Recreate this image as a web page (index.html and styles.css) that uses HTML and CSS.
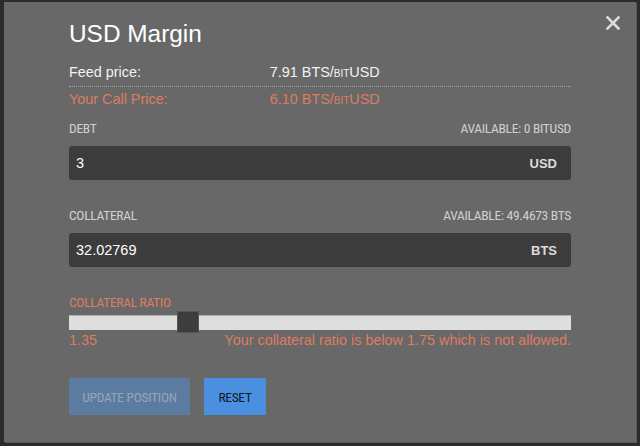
FILE: index.html
```html
<!DOCTYPE html>
<html lang="en">
<head>
<meta charset="utf-8">
<title>USD Margin</title>
<link rel="stylesheet" href="styles.css">
</head>
<body>
<div class="overlay">
  <div class="modal">
    <button class="close" aria-label="Close">
      <svg width="14" height="14" viewBox="0 0 14 14"><path d="M1.5 1.5 L12.5 12.5 M12.5 1.5 L1.5 12.5" stroke="#dcdcdc" stroke-width="2.6" stroke-linecap="square" fill="none"/></svg>
    </button>
    <h1 class="title">USD Margin</h1>
    <div class="prices">
      <div class="price-row feed">
        <span class="key">Feed price:</span>
        <span class="val">7.91 BTS/<span class="bit">bit</span>USD</span>
      </div>
      <div class="price-row call">
        <span class="key">Your Call Price:</span>
        <span class="val">6.10 BTS/<span class="bit">bit</span>USD</span>
      </div>
    </div>

    <div class="field">
      <div class="label-row"><span>DEBT</span><span>AVAILABLE: 0 BITUSD</span></div>
      <div class="input"><span class="amount">3</span><span class="unit">USD</span></div>
    </div>

    <div class="field">
      <div class="label-row"><span>COLLATERAL</span><span>AVAILABLE: 49.4673 BTS</span></div>
      <div class="input"><span class="amount">32.02769</span><span class="unit">BTS</span></div>
    </div>

    <div class="field ratio">
      <div class="label-row warn"><span>COLLATERAL RATIO</span></div>
      <div class="slider">
        <div class="thumb" style="left:108px"></div>
      </div>
      <div class="ratio-row">
        <span>1.35</span>
        <span>Your collateral ratio is below 1.75 which is not allowed.</span>
      </div>
    </div>

    <div class="buttons">
      <button class="btn disabled">UPDATE POSITION</button>
      <button class="btn primary">RESET</button>
    </div>
  </div>
</div>
</body>
</html>
```

FILE: styles.css
```css
html, body {
  margin: 0;
  padding: 0;
}
body {
  background: #2b2b2b;
  width: 640px;
  height: 446px;
  overflow: hidden;
  font-family: "Liberation Sans", Arial, sans-serif;
}
.overlay {
  padding: 2px 4px 0 4px;
}
.modal {
  position: relative;
  box-sizing: border-box;
  width: 632px;
  height: 440px;
  background: #686868;
  padding: 18px 65px 0 65px;
  box-shadow: 1px 1px 0 #5a5a5a;
}
.close {
  position: absolute;
  top: 14px;
  right: 16px;
  width: 14px;
  height: 14px;
  padding: 0;
  margin: 0;
  border: 0;
  background: none;
  display: flex;
}
.title {
  margin: 0 0 12px 0;
  font-size: 24.4px;
  line-height: 28px;
  font-weight: normal;
  color: #ffffff;
}
.price-row {
  display: flex;
  font-size: 14.4px;
  line-height: 20px;
}
.price-row .key {
  width: 40%;
}
.price-row.feed {
  color: #f2f2f2;
  padding: 2px 0 4px 0;
  border-bottom: 1px dotted #a8a8a8;
}
.price-row.call {
  color: #de7c60;
  padding-top: 2px;
}
.bit {
  font-variant: small-caps;
}
.field {
  margin-top: 27px;
}
.prices + .field {
  margin-top: 11px;
}
.label-row {
  display: flex;
  justify-content: space-between;
  font-family: "Liberation Sans Narrow", "Roboto Condensed", "DejaVu Sans Condensed", Roboto, sans-serif;
  font-size: 13.5px;
  letter-spacing: -0.3px;
  line-height: 16px;
  color: #d0d0d0;
}
.label-row.warn {
  color: #de7c60;
}
.input {
  margin-top: 10px;
  height: 34px;
  box-sizing: border-box;
  background: #3c3c3c;
  border-radius: 3px;
  display: flex;
  align-items: center;
  justify-content: space-between;
  padding: 0 14px 0 7px;
}
.amount {
  color: #ffffff;
  font-size: 14.5px;
}
.unit {
  color: #dcdcdc;
  font-size: 13px;
  font-weight: bold;
}
.slider {
  position: relative;
  margin-top: 5px;
  height: 15px;
  box-sizing: border-box;
  background: #dedede;
  border-top: 1px solid #b0b0b0;
}
.thumb {
  position: absolute;
  top: -5px;
  width: 22px;
  height: 22px;
  box-sizing: border-box;
  background: #3d3d3d;
  border: 1px solid #555555;
}
.ratio-row {
  display: flex;
  justify-content: space-between;
  font-size: 14.4px;
  line-height: 20px;
  color: #de7c60;
}
.buttons {
  margin-top: 28px;
  display: flex;
  gap: 14px;
}
.btn {
  height: 37px;
  padding: 0;
  border: 0;
  border-radius: 0;
  font-family: "Liberation Sans Narrow", "Roboto Condensed", "DejaVu Sans Condensed", Roboto, sans-serif;
  font-size: 13.5px;
  letter-spacing: -0.3px;
  margin: 0;
}
.btn.disabled {
  width: 121px;
  background: #5b7ba1;
  color: #97a6b8;
}
.btn.primary {
  width: 62px;
  background: #4a8fe0;
  color: #101722;
}
```
